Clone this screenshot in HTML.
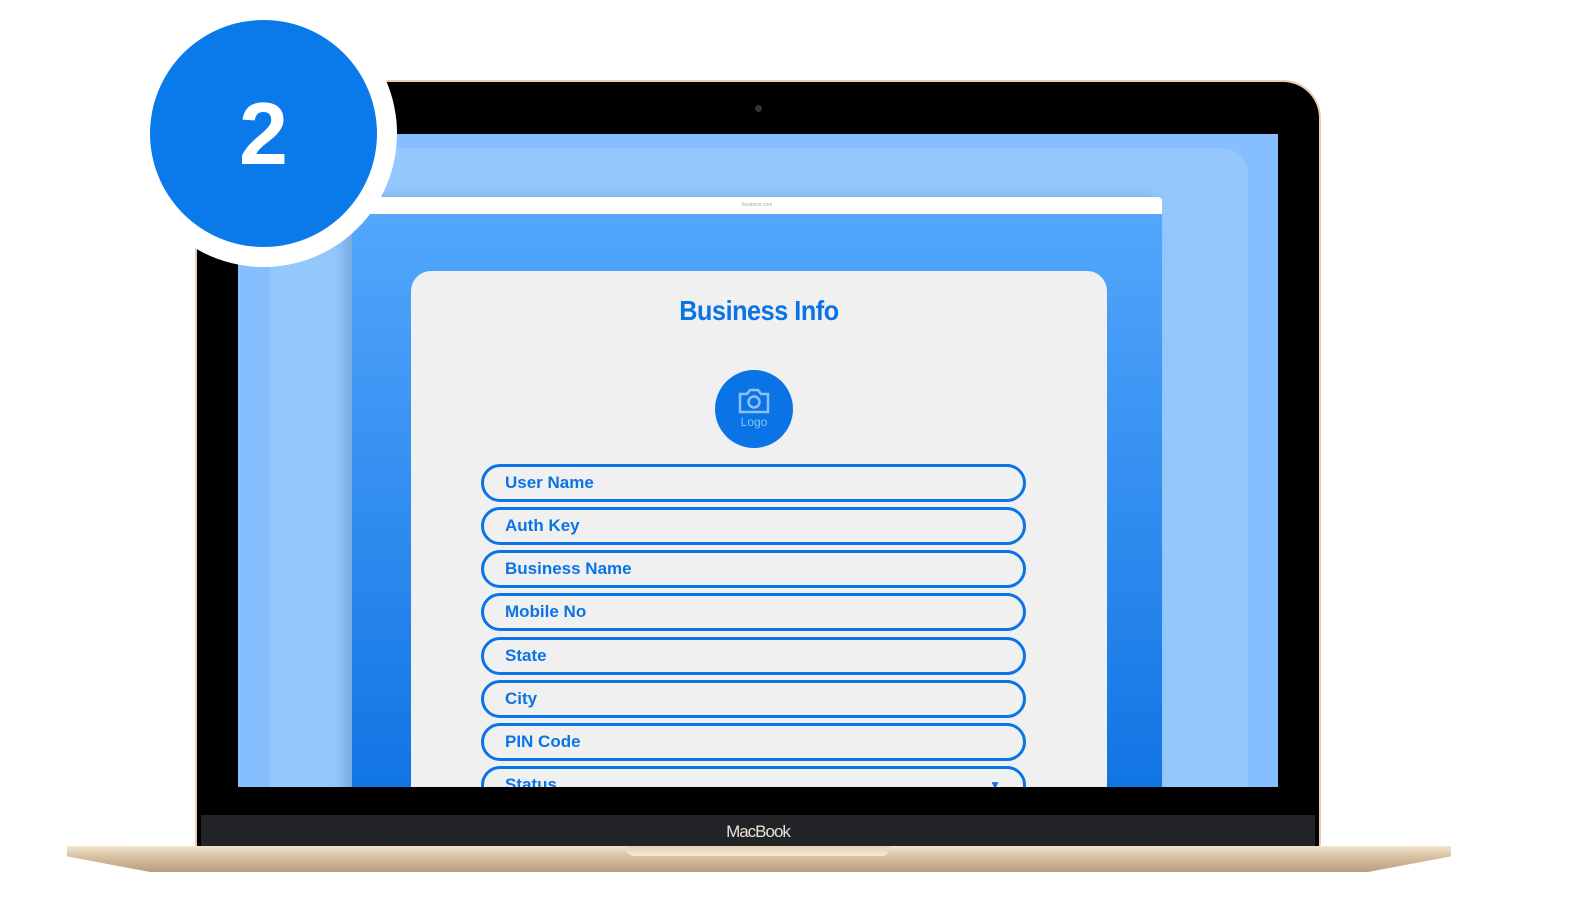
<!DOCTYPE html>
<html><head><meta charset="utf-8"><style>
*{margin:0;padding:0;box-sizing:border-box}
body{width:1590px;height:911px;background:#fff;position:relative;overflow:hidden;font-family:"Liberation Sans",sans-serif}
.abs{position:absolute}
.lid{left:195px;top:80px;width:1126px;height:770px;background:#000;border-radius:38px 38px 6px 6px;border:2px solid #e8cfae;border-bottom:none}
.screen{left:238px;top:134px;width:1040px;height:653px;background:#86bfff;overflow:hidden}
.panel{left:32px;top:14px;width:978px;height:700px;background:#94c8fd;border-radius:26px}
.win{left:114px;top:63px;width:810px;height:640px;background:linear-gradient(#55a8fc,#0b70e2);box-shadow:-8px 0 12px rgba(40,80,140,.25)}
.bar{left:0;top:0;width:810px;height:17px;background:#fff;border-radius:3px 3px 0 0;font-size:5px;color:#aaa;text-align:center;line-height:17px}
.card{left:173px;top:137px;width:696px;height:600px;background:#f0f0f0;border-radius:20px}
.title{left:0;width:696px;top:24px;text-align:center;color:#0a74e6;font-weight:bold;font-size:28px;letter-spacing:-0.5px;transform:scaleX(.9)}
.logo{left:304px;top:99px;width:78px;height:78px;border-radius:50%;background:#0a74e6;color:#8fc0f5;font-size:12px;text-align:center}
.field{left:70px;width:545px;height:38px;border:3px solid #0a74e6;border-radius:20px;color:#0a74e6;font-weight:bold;font-size:17px;line-height:32px;padding-left:21px}
.strip{left:201px;top:815px;width:1114px;height:33px;background:#222326;color:#e8e2d8;font-size:17px;text-align:center;line-height:33px;letter-spacing:-1px}
.base{left:67px;top:846px;width:1384px;height:26px;background:linear-gradient(#f2e3cf,#d9c2a2 40%,#b89e80);clip-path:polygon(0 0,100% 0,100% 40%,94% 100%,6% 100%,0 40%)}
.notch{left:626px;top:846px;width:264px;height:10px;background:linear-gradient(#e6d3b8,#f6e8d6);border-radius:0 0 8px 8px}
.badge{left:130px;top:0px;width:267px;height:267px;border-radius:50%;background:#fff}
.badge2{left:150px;top:20px;width:227px;height:227px;border-radius:50%;background:#0a7aeb;color:#fff;font-weight:bold;font-size:88px;text-align:center;line-height:227px}
</style></head><body>
<div class="abs lid"></div>
<div class="abs" style="left:755px;top:105px;width:7px;height:7px;border-radius:50%;background:#333"></div>
<div class="abs screen">
 <div class="abs panel"></div>
 <div class="abs win">
  <div class="abs bar">business.com</div>
  <div class="abs card" style="left:59px;top:74px">
   <div class="abs title">Business Info</div>
   <div class="abs logo">
    <svg width="40" height="34" viewBox="0 0 40 34" style="margin-top:16px"><path d="M6 8h7l3-4h8l3 4h7v18H6z" fill="none" stroke="#8fc0f5" stroke-width="2.5"/><circle cx="20" cy="16" r="5.5" fill="none" stroke="#8fc0f5" stroke-width="2.5"/></svg>
    <div style="margin-top:-8px">Logo</div>
   </div>
   <div class="abs field" style="top:193px">User Name</div>
   <div class="abs field" style="top:236px">Auth Key</div>
   <div class="abs field" style="top:279px">Business Name</div>
   <div class="abs field" style="top:322px">Mobile No</div>
   <div class="abs field" style="top:366px">State</div>
   <div class="abs field" style="top:409px">City</div>
   <div class="abs field" style="top:452px">PIN Code</div>
   <div class="abs field" style="top:495px">Status<span style="position:absolute;right:22px;top:0;font-size:12px">▼</span></div>
  </div>
 </div>
</div>
<div class="abs strip">MacBook</div>
<div class="abs base"></div>
<div class="abs notch"></div>
<div class="abs badge"></div>
<div class="abs badge2">2</div>
</body></html>
